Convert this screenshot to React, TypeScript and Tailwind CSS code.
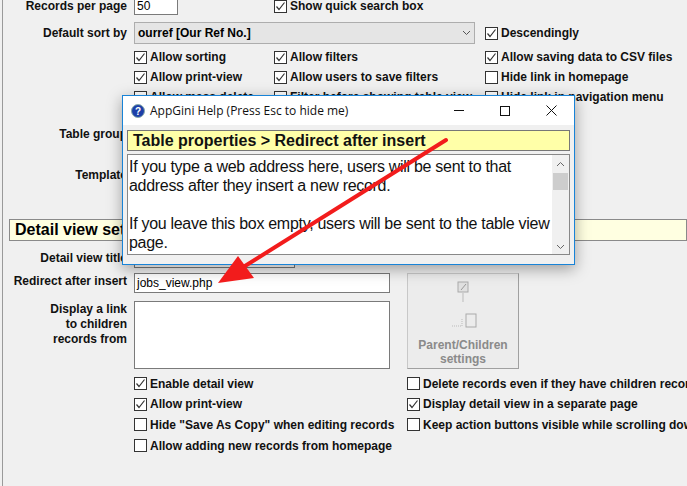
import React from "react";

const F = { fontFamily: '"Liberation Sans", Arial, sans-serif' };

function Cb({ checked, label, w }: { checked?: boolean; label: string; w?: string }) {
  return (
    <div className={`flex items-center gap-[3px] shrink-0 ${w ?? ""}`}>
      <div className="w-[13px] h-[13px] border border-[#333] bg-white flex items-center justify-center shrink-0">
        {checked && (
          <svg width="11" height="11" viewBox="0 0 11 11">
            <path d="M1.5 5.5 L4 8.5 L9.5 1.5" fill="none" stroke="#333" strokeWidth="1.2" />
          </svg>
        )}
      </div>
      <span className="whitespace-nowrap text-[12px] font-bold text-[#111]">{label}</span>
    </div>
  );
}

function Label({ children }: { children: React.ReactNode }) {
  return <div className="w-[127px] shrink-0 text-right text-[12px] font-bold text-[#111] pr-0 mr-[7px] leading-[15px]">{children}</div>;
}

export default function App() {
  return (
    <div style={F} className="relative w-[687px] h-[486px] overflow-hidden bg-[#f0f0f0]">
      <div className="absolute left-[2px] top-0 h-full w-[1px] bg-[#9a9a9a]" />
      <div className="flex flex-col">
        <div className="flex items-center h-[18px] -mt-[3px]">
          <Label>Records per page</Label>
          <div className="w-[44px] h-[18px] bg-white border border-[#7a7a7a] text-[12px] pl-[2px] leading-[16px]">50</div>
          <div className="ml-[96px]"><Cb checked label="Show quick search box" /></div>
        </div>
        <div className="flex items-center h-[22px] mt-[7px]">
          <Label>Default sort by</Label>
          <div className="w-[341px] h-[22px] bg-[#e5e5e5] border border-[#adadad] flex items-center justify-between px-[3px] text-[12px] font-bold">
            <span>ourref [Our Ref No.]</span>
            <svg width="9" height="6" viewBox="0 0 9 6"><path d="M1 1 L4.5 4.5 L8 1" fill="none" stroke="#555" /></svg>
          </div>
          <div className="ml-[10px]"><Cb checked label="Descendingly" /></div>
        </div>
        {[
          ["Allow sorting", true, "Allow filters", true, "Allow saving data to CSV files", true],
          ["Allow print-view", true, "Allow users to save filters", true, "Hide link in homepage", false],
          ["Allow mass delete", false, "Filter before showing table view", false, "Hide link in navigation menu", false],
        ].map((r, i) => (
          <div key={i} className={`flex items-center h-[20px] pl-[134px] ${i === 0 ? "mt-[3px]" : ""}`}>
            <Cb w="w-[140px]" checked={r[1] as boolean} label={r[0] as string} />
            <Cb w="w-[211px]" checked={r[3] as boolean} label={r[2] as string} />
            <Cb checked={r[5] as boolean} label={r[4] as string} />
          </div>
        ))}
        <div className="flex items-center h-[20px] mt-[17px]"><Label>Table group</Label><div className="w-[200px] h-[20px] bg-[#e5e5e5] border border-[#adadad]" /></div>
        <div className="flex items-center h-[20px] mt-[21px]"><Label>Template</Label></div>
        <div className="ml-[9px] mt-[34px] h-[22px] border border-[#8a8a8a] bg-[#ffffe1] text-[16px] font-bold pl-[5px] leading-[20px]">Detail view settings</div>
        <div className="flex items-center h-[20px] mt-[7px]">
          <Label>Detail view title</Label>
          <div className="w-[161px] h-[20px] bg-white border border-[#7a7a7a]" />
        </div>
        <div className="flex mt-[5px]">
          <div className="flex flex-col">
            <div className="flex items-start h-[20px]">
              <Label><div className="pt-[1px]">Redirect after insert</div></Label>
              <div className="w-[256px] h-[20px] bg-white border border-[#7a7a7a] text-[12px] leading-[18px] pl-[2px]">jobs_view.php</div>
            </div>
            <div className="flex items-start mt-[8px]">
              <Label><div className="pt-[1px]">Display a link<br />to children<br />records from</div></Label>
              <div className="w-[256px] h-[68px] bg-white border border-[#7a7a7a]" />
            </div>
          </div>
          <div className="ml-[17px] w-[112px] h-[96px] bg-[#ececec] border border-[#c8c8c8] border-r-[#a0a0a0] border-b-[#a0a0a0] flex flex-col items-center">
            <svg width="40" height="50" viewBox="0 0 40 50" className="mt-[6px]">
              <rect x="15" y="2" width="10" height="10" fill="#e0e0e0" stroke="#aaa" />
              <path d="M18 10 L23 4" stroke="#999" />
              <path d="M20 13 L20 22" stroke="#bbb" />
              <rect x="23" y="34" width="10" height="13" fill="none" stroke="#aaa" />
              <path d="M9 46 L19 46 M19 39 L19 46" stroke="#bbb" strokeDasharray="1 1" />
            </svg>
            <div className="text-[12px] font-bold text-[#8a8a8a] text-center leading-[14px] mt-[8px]">Parent/Children<br />settings</div>
          </div>
        </div>
        <div className="flex pl-[134px] mt-[4px]">
          <div className="flex flex-col w-[273px] shrink-0">
            <div className="h-[21px] flex items-center"><Cb checked label="Enable detail view" /></div>
            <div className="h-[20px] flex items-center"><Cb checked label="Allow print-view" /></div>
            <div className="h-[21px] flex items-center"><Cb label={'Hide "Save As Copy" when editing records'} /></div>
            <div className="h-[21px] flex items-center"><Cb label="Allow adding new records from homepage" /></div>
          </div>
          <div className="flex flex-col">
            <div className="h-[21px] flex items-center"><Cb label="Delete records even if they have children records" /></div>
            <div className="h-[20px] flex items-center"><Cb checked label="Display detail view in a separate page" /></div>
            <div className="h-[21px] flex items-center"><Cb label="Keep action buttons visible while scrolling down" /></div>
          </div>
        </div>
      </div>

      {/* Help dialog */}
      <div className="absolute left-[122px] top-[95px] w-[453px] h-[170px] bg-[#f0f0f0] border border-[#1883d7] shadow-[0_4px_14px_rgba(0,0,0,0.35)] flex flex-col">
        <div className="h-[29px] bg-white flex items-center pl-[8px] shrink-0">
          <svg width="14" height="14" viewBox="0 0 14 14"><circle cx="7" cy="7" r="6.5" fill="#1c3fa8" stroke="#8aa" /><text x="7" y="11" textAnchor="middle" fontSize="10" fontWeight="bold" fill="white" fontFamily="Liberation Sans">?</text></svg>
          <span className="ml-[5px] text-[12px] text-[#111]" style={{ fontFamily: '"Open Sans", sans-serif' }}>AppGini Help (Press Esc to hide me)</span>
          <div className="ml-auto flex items-center">
            <div className="w-[46px] flex justify-center"><div className="w-[10px] h-[1px] bg-[#111]" /></div>
            <div className="w-[46px] flex justify-center"><div className="w-[10px] h-[10px] border border-[#111]" /></div>
            <div className="w-[46px] flex justify-center"><svg width="11" height="11" viewBox="0 0 11 11"><path d="M0.5 0.5 L10.5 10.5 M10.5 0.5 L0.5 10.5" stroke="#111" /></svg></div>
          </div>
        </div>
        <div className="mx-[4px] mt-[5px] h-[21px] bg-[#ffffa8] border border-[#777] text-[16px] font-bold pl-[5px] leading-[19px] text-[#111]">Table properties &gt; Redirect after insert</div>
        <div className="mx-[4px] mt-[3px] h-[101px] bg-white border border-[#888] flex overflow-hidden">
          <div className="flex-1 text-[16px] leading-[19px] text-[#111] pl-[1px] pt-[2px] tracking-[-0.3px]">
            If you type a web address here, users will be sent to that<br />address after they insert a new record.<br /><br />If you leave this box empty, users will be sent to the table view page.
          </div>
          <div className="w-[17px] bg-[#f0f0f0] flex flex-col items-center">
            <svg width="9" height="6" viewBox="0 0 9 6" className="mt-[6px]"><path d="M1 5 L4.5 1.5 L8 5" fill="none" stroke="#666" /></svg>
            <div className="w-[15px] h-[17px] bg-[#cdcdcd] mt-[6px]" />
            <svg width="9" height="6" viewBox="0 0 9 6" className="mt-auto mb-[4px]"><path d="M1 1 L4.5 4.5 L8 1" fill="none" stroke="#666" /></svg>
          </div>
        </div>
      </div>

      {/* red arrow */}
      <svg className="absolute left-0 top-0 pointer-events-none" width="687" height="486">
        <path d="M446 140 L245 266" stroke="#f21c1c" strokeWidth="4" strokeLinecap="round" />
        <path d="M218 283 L238 256 L254 278 Z" fill="#f21c1c" />
      </svg>
    </div>
  );
}
